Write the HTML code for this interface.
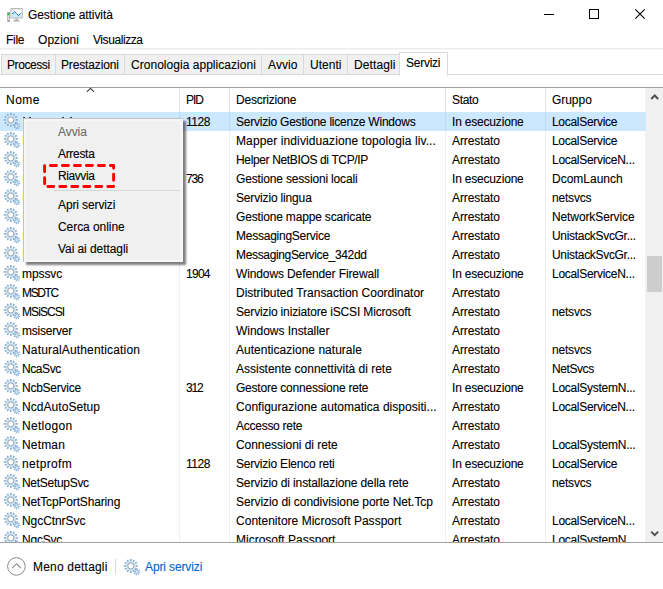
<!DOCTYPE html>
<html><head><meta charset="utf-8"><title>Gestione attività</title>
<style>
html,body{margin:0;padding:0;background:#fff;}
body{width:663px;height:589px;position:relative;overflow:hidden;font-family:"Liberation Sans",sans-serif;font-size:12px;color:#000;}
.a{position:absolute;white-space:nowrap;line-height:14px;-webkit-text-stroke:0.1px currentColor;}
.ln{position:absolute;}
svg{position:absolute;overflow:visible}
</style></head><body>

<svg style="left:0;top:0" width="30" height="30" viewBox="0 0 30 30">
<rect x="7.3" y="12.5" width="2.6" height="9.1" rx="0.8" fill="#a9a9a9"/>
<rect x="8" y="13" width="1.2" height="8" fill="#dcdcdc"/>
<rect x="7.4" y="12.6" width="2.4" height="1" fill="#5e5468"/>
<rect x="7.6" y="13.7" width="2" height="1.5" fill="#2ad02a"/>
<rect x="7.4" y="20.6" width="2.4" height="1" fill="#777"/>
<rect x="10.4" y="8.1" width="12.4" height="10.4" rx="0.8" fill="#b4b4b4"/>
<rect x="11.1" y="8.8" width="11" height="8.9" fill="#dedede"/>
<rect x="11.8" y="9.9" width="9.6" height="7" fill="#fff"/>
<path d="M11.8 13.5 L13.4 13.4 L14.5 11.4 L16.7 13.6 L18.5 15.6 L20.6 13.4 L21.4 13.4 V16.9 H11.8 Z" fill="#c6ebfa"/>
<path d="M12 13.4 L13.4 13.4 L14.5 11.3 L16.7 13.6 L18.5 15.6 L20.6 13.4 L21.2 13.4" fill="none" stroke="#1f7fc4" stroke-width="1"/>
<rect x="15.3" y="18.5" width="2.4" height="1.6" fill="#b4b4b4"/>
<path d="M14 19.9 H19 L19.8 21.6 H13.2 Z" fill="#b0b0b0"/>
</svg>
<div class="ln" style="left:544px;top:14px;width:10px;height:1px;background:#000"></div>
<div class="ln" style="left:589px;top:9px;width:8px;height:8px;border:1px solid #000"></div>
<svg style="left:635px;top:9px" width="12" height="12" viewBox="0 0 12 12"><path d="M0.3 0.3 L9.7 9.7 M9.7 0.3 L0.3 9.7" stroke="#000" stroke-width="1.1" fill="none"/></svg>
<div class="ln" style="left:0;top:48px;width:663px;height:1px;background:#ededed"></div>
<div class="ln" style="left:0;top:49px;width:663px;height:1px;background:#f7f7f7"></div>
<div class="ln" style="left:1px;top:54px;width:398px;height:20px;background:#f0f0f0;border-top:1px solid #d9d9d9;box-sizing:border-box"></div>
<div class="ln" style="left:1px;top:54px;width:1px;height:20px;background:#d9d9d9"></div>
<div class="ln" style="left:55px;top:54px;width:1px;height:20px;background:#d9d9d9"></div>
<div class="ln" style="left:124px;top:54px;width:1px;height:20px;background:#d9d9d9"></div>
<div class="ln" style="left:261px;top:54px;width:1px;height:20px;background:#d9d9d9"></div>
<div class="ln" style="left:303px;top:54px;width:1px;height:20px;background:#d9d9d9"></div>
<div class="ln" style="left:347px;top:54px;width:1px;height:20px;background:#d9d9d9"></div>
<div class="ln" style="left:0;top:74px;width:663px;height:1px;background:#d9d9d9"></div>
<div class="ln" style="left:399px;top:52px;width:47px;height:22px;border:1px solid #d9d9d9;border-bottom:1px solid #fff;background:#fff"></div>
<div class="ln" style="left:0;top:87px;width:663px;height:1px;background:#a0a0a0"></div>
<div class="ln" style="left:0;top:542px;width:663px;height:1px;background:#a0a0a0"></div>
<svg style="left:86px;top:88px" width="9" height="5" viewBox="86 88 9 5"><path d="M86.9 91.9 L90.5 88.3 L94.1 91.9" stroke="#4a4a4a" stroke-width="1.3" fill="none"/></svg>
<div class="ln" style="left:0;top:112px;width:646px;height:19px;background:#cce8ff"></div>
<div class="ln" style="left:179px;top:88px;width:1px;height:24px;background:#e0e5ea"></div>
<div class="ln" style="left:179px;top:112px;width:1px;height:19px;background:#bcdcf4"></div>
<div class="ln" style="left:179px;top:131px;width:1px;height:411px;background:#e9f1fa"></div>
<div class="ln" style="left:229px;top:88px;width:1px;height:24px;background:#e0e5ea"></div>
<div class="ln" style="left:229px;top:112px;width:1px;height:19px;background:#bcdcf4"></div>
<div class="ln" style="left:229px;top:131px;width:1px;height:411px;background:#e9f1fa"></div>
<div class="ln" style="left:445px;top:88px;width:1px;height:24px;background:#e0e5ea"></div>
<div class="ln" style="left:445px;top:112px;width:1px;height:19px;background:#bcdcf4"></div>
<div class="ln" style="left:445px;top:131px;width:1px;height:411px;background:#e9f1fa"></div>
<div class="ln" style="left:545px;top:88px;width:1px;height:24px;background:#e0e5ea"></div>
<div class="ln" style="left:545px;top:112px;width:1px;height:19px;background:#bcdcf4"></div>
<div class="ln" style="left:545px;top:131px;width:1px;height:411px;background:#e9f1fa"></div>
<div class="a" style="left:28px;top:8px;letter-spacing:-0.072px;">Gestione attività</div>
<div class="a" style="left:6px;top:33px;letter-spacing:-0.279px;">File</div>
<div class="a" style="left:38px;top:33px;letter-spacing:0.052px;">Opzioni</div>
<div class="a" style="left:93px;top:33px;letter-spacing:-0.423px;">Visualizza</div>
<div class="a" style="left:7px;top:58px;letter-spacing:-0.416px;">Processi</div>
<div class="a" style="left:61px;top:58px;letter-spacing:-0.146px;">Prestazioni</div>
<div class="a" style="left:131px;top:58px;letter-spacing:0.033px;">Cronologia applicazioni</div>
<div class="a" style="left:268px;top:58px;letter-spacing:0.093px;">Avvio</div>
<div class="a" style="left:310px;top:58px;letter-spacing:0.030px;">Utenti</div>
<div class="a" style="left:354px;top:58px;letter-spacing:0.116px;">Dettagli</div>
<div class="a" style="left:406px;top:56px;letter-spacing:-0.251px;">Servizi</div>
<div class="a" style="left:6px;top:93px;letter-spacing:0.497px;">Nome</div>
<div class="a" style="left:186px;top:93px;letter-spacing:-1.102px;">PID</div>
<div class="a" style="left:236px;top:93px;letter-spacing:-0.219px;">Descrizione</div>
<div class="a" style="left:452px;top:93px;letter-spacing:-0.330px;">Stato</div>
<div class="a" style="left:552px;top:93px;letter-spacing:-0.045px;">Gruppo</div>
<div style="position:absolute;left:0;top:112px;width:646px;height:430px;overflow:hidden">
<svg style="left:4px;top:1px" width="16" height="16" viewBox="0 0 16 16"><g>
<g transform="translate(6.8 6.9)" fill="#8aadd0"><rect x="-0.85" y="-6.95" width="1.7" height="2.3" transform="rotate(0)"/><rect x="-0.85" y="-6.95" width="1.7" height="2.3" transform="rotate(30)"/><rect x="-0.85" y="-6.95" width="1.7" height="2.3" transform="rotate(60)"/><rect x="-0.85" y="-6.95" width="1.7" height="2.3" transform="rotate(90)"/><rect x="-0.85" y="-6.95" width="1.7" height="2.3" transform="rotate(120)"/><rect x="-0.85" y="-6.95" width="1.7" height="2.3" transform="rotate(150)"/><rect x="-0.85" y="-6.95" width="1.7" height="2.3" transform="rotate(180)"/><rect x="-0.85" y="-6.95" width="1.7" height="2.3" transform="rotate(210)"/><rect x="-0.85" y="-6.95" width="1.7" height="2.3" transform="rotate(240)"/><rect x="-0.85" y="-6.95" width="1.7" height="2.3" transform="rotate(270)"/><rect x="-0.85" y="-6.95" width="1.7" height="2.3" transform="rotate(300)"/><rect x="-0.85" y="-6.95" width="1.7" height="2.3" transform="rotate(330)"/></g>
<circle cx="6.8" cy="6.9" r="3.95" fill="none" stroke="#c8e6f6" stroke-width="2.1"/>
<circle cx="6.8" cy="6.9" r="3.05" fill="#fff" stroke="#868d96" stroke-width="0.8"/>
<g transform="translate(12.8 12.9)" fill="#7aa3cc"><rect x="-0.5" y="-3.4" width="1" height="1.5" transform="rotate(10)"/><rect x="-0.5" y="-3.4" width="1" height="1.5" transform="rotate(55)"/><rect x="-0.5" y="-3.4" width="1" height="1.5" transform="rotate(100)"/><rect x="-0.5" y="-3.4" width="1" height="1.5" transform="rotate(145)"/><rect x="-0.5" y="-3.4" width="1" height="1.5" transform="rotate(190)"/><rect x="-0.5" y="-3.4" width="1" height="1.5" transform="rotate(235)"/><rect x="-0.5" y="-3.4" width="1" height="1.5" transform="rotate(280)"/><rect x="-0.5" y="-3.4" width="1" height="1.5" transform="rotate(325)"/></g>
<circle cx="12.8" cy="12.9" r="1.5" fill="#fff" stroke="#a9cde8" stroke-width="1.5"/>
</symbol></svg>
<svg style="left:4px;top:20px" width="16" height="16" viewBox="0 0 16 16"><g>
<g transform="translate(6.8 6.9)" fill="#8aadd0"><rect x="-0.85" y="-6.95" width="1.7" height="2.3" transform="rotate(0)"/><rect x="-0.85" y="-6.95" width="1.7" height="2.3" transform="rotate(30)"/><rect x="-0.85" y="-6.95" width="1.7" height="2.3" transform="rotate(60)"/><rect x="-0.85" y="-6.95" width="1.7" height="2.3" transform="rotate(90)"/><rect x="-0.85" y="-6.95" width="1.7" height="2.3" transform="rotate(120)"/><rect x="-0.85" y="-6.95" width="1.7" height="2.3" transform="rotate(150)"/><rect x="-0.85" y="-6.95" width="1.7" height="2.3" transform="rotate(180)"/><rect x="-0.85" y="-6.95" width="1.7" height="2.3" transform="rotate(210)"/><rect x="-0.85" y="-6.95" width="1.7" height="2.3" transform="rotate(240)"/><rect x="-0.85" y="-6.95" width="1.7" height="2.3" transform="rotate(270)"/><rect x="-0.85" y="-6.95" width="1.7" height="2.3" transform="rotate(300)"/><rect x="-0.85" y="-6.95" width="1.7" height="2.3" transform="rotate(330)"/></g>
<circle cx="6.8" cy="6.9" r="3.95" fill="none" stroke="#c8e6f6" stroke-width="2.1"/>
<circle cx="6.8" cy="6.9" r="3.05" fill="#fff" stroke="#868d96" stroke-width="0.8"/>
<g transform="translate(12.8 12.9)" fill="#7aa3cc"><rect x="-0.5" y="-3.4" width="1" height="1.5" transform="rotate(10)"/><rect x="-0.5" y="-3.4" width="1" height="1.5" transform="rotate(55)"/><rect x="-0.5" y="-3.4" width="1" height="1.5" transform="rotate(100)"/><rect x="-0.5" y="-3.4" width="1" height="1.5" transform="rotate(145)"/><rect x="-0.5" y="-3.4" width="1" height="1.5" transform="rotate(190)"/><rect x="-0.5" y="-3.4" width="1" height="1.5" transform="rotate(235)"/><rect x="-0.5" y="-3.4" width="1" height="1.5" transform="rotate(280)"/><rect x="-0.5" y="-3.4" width="1" height="1.5" transform="rotate(325)"/></g>
<circle cx="12.8" cy="12.9" r="1.5" fill="#fff" stroke="#a9cde8" stroke-width="1.5"/>
</symbol></svg>
<svg style="left:4px;top:39px" width="16" height="16" viewBox="0 0 16 16"><g>
<g transform="translate(6.8 6.9)" fill="#8aadd0"><rect x="-0.85" y="-6.95" width="1.7" height="2.3" transform="rotate(0)"/><rect x="-0.85" y="-6.95" width="1.7" height="2.3" transform="rotate(30)"/><rect x="-0.85" y="-6.95" width="1.7" height="2.3" transform="rotate(60)"/><rect x="-0.85" y="-6.95" width="1.7" height="2.3" transform="rotate(90)"/><rect x="-0.85" y="-6.95" width="1.7" height="2.3" transform="rotate(120)"/><rect x="-0.85" y="-6.95" width="1.7" height="2.3" transform="rotate(150)"/><rect x="-0.85" y="-6.95" width="1.7" height="2.3" transform="rotate(180)"/><rect x="-0.85" y="-6.95" width="1.7" height="2.3" transform="rotate(210)"/><rect x="-0.85" y="-6.95" width="1.7" height="2.3" transform="rotate(240)"/><rect x="-0.85" y="-6.95" width="1.7" height="2.3" transform="rotate(270)"/><rect x="-0.85" y="-6.95" width="1.7" height="2.3" transform="rotate(300)"/><rect x="-0.85" y="-6.95" width="1.7" height="2.3" transform="rotate(330)"/></g>
<circle cx="6.8" cy="6.9" r="3.95" fill="none" stroke="#c8e6f6" stroke-width="2.1"/>
<circle cx="6.8" cy="6.9" r="3.05" fill="#fff" stroke="#868d96" stroke-width="0.8"/>
<g transform="translate(12.8 12.9)" fill="#7aa3cc"><rect x="-0.5" y="-3.4" width="1" height="1.5" transform="rotate(10)"/><rect x="-0.5" y="-3.4" width="1" height="1.5" transform="rotate(55)"/><rect x="-0.5" y="-3.4" width="1" height="1.5" transform="rotate(100)"/><rect x="-0.5" y="-3.4" width="1" height="1.5" transform="rotate(145)"/><rect x="-0.5" y="-3.4" width="1" height="1.5" transform="rotate(190)"/><rect x="-0.5" y="-3.4" width="1" height="1.5" transform="rotate(235)"/><rect x="-0.5" y="-3.4" width="1" height="1.5" transform="rotate(280)"/><rect x="-0.5" y="-3.4" width="1" height="1.5" transform="rotate(325)"/></g>
<circle cx="12.8" cy="12.9" r="1.5" fill="#fff" stroke="#a9cde8" stroke-width="1.5"/>
</symbol></svg>
<svg style="left:4px;top:58px" width="16" height="16" viewBox="0 0 16 16"><g>
<g transform="translate(6.8 6.9)" fill="#8aadd0"><rect x="-0.85" y="-6.95" width="1.7" height="2.3" transform="rotate(0)"/><rect x="-0.85" y="-6.95" width="1.7" height="2.3" transform="rotate(30)"/><rect x="-0.85" y="-6.95" width="1.7" height="2.3" transform="rotate(60)"/><rect x="-0.85" y="-6.95" width="1.7" height="2.3" transform="rotate(90)"/><rect x="-0.85" y="-6.95" width="1.7" height="2.3" transform="rotate(120)"/><rect x="-0.85" y="-6.95" width="1.7" height="2.3" transform="rotate(150)"/><rect x="-0.85" y="-6.95" width="1.7" height="2.3" transform="rotate(180)"/><rect x="-0.85" y="-6.95" width="1.7" height="2.3" transform="rotate(210)"/><rect x="-0.85" y="-6.95" width="1.7" height="2.3" transform="rotate(240)"/><rect x="-0.85" y="-6.95" width="1.7" height="2.3" transform="rotate(270)"/><rect x="-0.85" y="-6.95" width="1.7" height="2.3" transform="rotate(300)"/><rect x="-0.85" y="-6.95" width="1.7" height="2.3" transform="rotate(330)"/></g>
<circle cx="6.8" cy="6.9" r="3.95" fill="none" stroke="#c8e6f6" stroke-width="2.1"/>
<circle cx="6.8" cy="6.9" r="3.05" fill="#fff" stroke="#868d96" stroke-width="0.8"/>
<g transform="translate(12.8 12.9)" fill="#7aa3cc"><rect x="-0.5" y="-3.4" width="1" height="1.5" transform="rotate(10)"/><rect x="-0.5" y="-3.4" width="1" height="1.5" transform="rotate(55)"/><rect x="-0.5" y="-3.4" width="1" height="1.5" transform="rotate(100)"/><rect x="-0.5" y="-3.4" width="1" height="1.5" transform="rotate(145)"/><rect x="-0.5" y="-3.4" width="1" height="1.5" transform="rotate(190)"/><rect x="-0.5" y="-3.4" width="1" height="1.5" transform="rotate(235)"/><rect x="-0.5" y="-3.4" width="1" height="1.5" transform="rotate(280)"/><rect x="-0.5" y="-3.4" width="1" height="1.5" transform="rotate(325)"/></g>
<circle cx="12.8" cy="12.9" r="1.5" fill="#fff" stroke="#a9cde8" stroke-width="1.5"/>
</symbol></svg>
<svg style="left:4px;top:77px" width="16" height="16" viewBox="0 0 16 16"><g>
<g transform="translate(6.8 6.9)" fill="#8aadd0"><rect x="-0.85" y="-6.95" width="1.7" height="2.3" transform="rotate(0)"/><rect x="-0.85" y="-6.95" width="1.7" height="2.3" transform="rotate(30)"/><rect x="-0.85" y="-6.95" width="1.7" height="2.3" transform="rotate(60)"/><rect x="-0.85" y="-6.95" width="1.7" height="2.3" transform="rotate(90)"/><rect x="-0.85" y="-6.95" width="1.7" height="2.3" transform="rotate(120)"/><rect x="-0.85" y="-6.95" width="1.7" height="2.3" transform="rotate(150)"/><rect x="-0.85" y="-6.95" width="1.7" height="2.3" transform="rotate(180)"/><rect x="-0.85" y="-6.95" width="1.7" height="2.3" transform="rotate(210)"/><rect x="-0.85" y="-6.95" width="1.7" height="2.3" transform="rotate(240)"/><rect x="-0.85" y="-6.95" width="1.7" height="2.3" transform="rotate(270)"/><rect x="-0.85" y="-6.95" width="1.7" height="2.3" transform="rotate(300)"/><rect x="-0.85" y="-6.95" width="1.7" height="2.3" transform="rotate(330)"/></g>
<circle cx="6.8" cy="6.9" r="3.95" fill="none" stroke="#c8e6f6" stroke-width="2.1"/>
<circle cx="6.8" cy="6.9" r="3.05" fill="#fff" stroke="#868d96" stroke-width="0.8"/>
<g transform="translate(12.8 12.9)" fill="#7aa3cc"><rect x="-0.5" y="-3.4" width="1" height="1.5" transform="rotate(10)"/><rect x="-0.5" y="-3.4" width="1" height="1.5" transform="rotate(55)"/><rect x="-0.5" y="-3.4" width="1" height="1.5" transform="rotate(100)"/><rect x="-0.5" y="-3.4" width="1" height="1.5" transform="rotate(145)"/><rect x="-0.5" y="-3.4" width="1" height="1.5" transform="rotate(190)"/><rect x="-0.5" y="-3.4" width="1" height="1.5" transform="rotate(235)"/><rect x="-0.5" y="-3.4" width="1" height="1.5" transform="rotate(280)"/><rect x="-0.5" y="-3.4" width="1" height="1.5" transform="rotate(325)"/></g>
<circle cx="12.8" cy="12.9" r="1.5" fill="#fff" stroke="#a9cde8" stroke-width="1.5"/>
</symbol></svg>
<svg style="left:4px;top:96px" width="16" height="16" viewBox="0 0 16 16"><g>
<g transform="translate(6.8 6.9)" fill="#8aadd0"><rect x="-0.85" y="-6.95" width="1.7" height="2.3" transform="rotate(0)"/><rect x="-0.85" y="-6.95" width="1.7" height="2.3" transform="rotate(30)"/><rect x="-0.85" y="-6.95" width="1.7" height="2.3" transform="rotate(60)"/><rect x="-0.85" y="-6.95" width="1.7" height="2.3" transform="rotate(90)"/><rect x="-0.85" y="-6.95" width="1.7" height="2.3" transform="rotate(120)"/><rect x="-0.85" y="-6.95" width="1.7" height="2.3" transform="rotate(150)"/><rect x="-0.85" y="-6.95" width="1.7" height="2.3" transform="rotate(180)"/><rect x="-0.85" y="-6.95" width="1.7" height="2.3" transform="rotate(210)"/><rect x="-0.85" y="-6.95" width="1.7" height="2.3" transform="rotate(240)"/><rect x="-0.85" y="-6.95" width="1.7" height="2.3" transform="rotate(270)"/><rect x="-0.85" y="-6.95" width="1.7" height="2.3" transform="rotate(300)"/><rect x="-0.85" y="-6.95" width="1.7" height="2.3" transform="rotate(330)"/></g>
<circle cx="6.8" cy="6.9" r="3.95" fill="none" stroke="#c8e6f6" stroke-width="2.1"/>
<circle cx="6.8" cy="6.9" r="3.05" fill="#fff" stroke="#868d96" stroke-width="0.8"/>
<g transform="translate(12.8 12.9)" fill="#7aa3cc"><rect x="-0.5" y="-3.4" width="1" height="1.5" transform="rotate(10)"/><rect x="-0.5" y="-3.4" width="1" height="1.5" transform="rotate(55)"/><rect x="-0.5" y="-3.4" width="1" height="1.5" transform="rotate(100)"/><rect x="-0.5" y="-3.4" width="1" height="1.5" transform="rotate(145)"/><rect x="-0.5" y="-3.4" width="1" height="1.5" transform="rotate(190)"/><rect x="-0.5" y="-3.4" width="1" height="1.5" transform="rotate(235)"/><rect x="-0.5" y="-3.4" width="1" height="1.5" transform="rotate(280)"/><rect x="-0.5" y="-3.4" width="1" height="1.5" transform="rotate(325)"/></g>
<circle cx="12.8" cy="12.9" r="1.5" fill="#fff" stroke="#a9cde8" stroke-width="1.5"/>
</symbol></svg>
<svg style="left:4px;top:115px" width="16" height="16" viewBox="0 0 16 16"><g>
<g transform="translate(6.8 6.9)" fill="#8aadd0"><rect x="-0.85" y="-6.95" width="1.7" height="2.3" transform="rotate(0)"/><rect x="-0.85" y="-6.95" width="1.7" height="2.3" transform="rotate(30)"/><rect x="-0.85" y="-6.95" width="1.7" height="2.3" transform="rotate(60)"/><rect x="-0.85" y="-6.95" width="1.7" height="2.3" transform="rotate(90)"/><rect x="-0.85" y="-6.95" width="1.7" height="2.3" transform="rotate(120)"/><rect x="-0.85" y="-6.95" width="1.7" height="2.3" transform="rotate(150)"/><rect x="-0.85" y="-6.95" width="1.7" height="2.3" transform="rotate(180)"/><rect x="-0.85" y="-6.95" width="1.7" height="2.3" transform="rotate(210)"/><rect x="-0.85" y="-6.95" width="1.7" height="2.3" transform="rotate(240)"/><rect x="-0.85" y="-6.95" width="1.7" height="2.3" transform="rotate(270)"/><rect x="-0.85" y="-6.95" width="1.7" height="2.3" transform="rotate(300)"/><rect x="-0.85" y="-6.95" width="1.7" height="2.3" transform="rotate(330)"/></g>
<circle cx="6.8" cy="6.9" r="3.95" fill="none" stroke="#c8e6f6" stroke-width="2.1"/>
<circle cx="6.8" cy="6.9" r="3.05" fill="#fff" stroke="#868d96" stroke-width="0.8"/>
<g transform="translate(12.8 12.9)" fill="#7aa3cc"><rect x="-0.5" y="-3.4" width="1" height="1.5" transform="rotate(10)"/><rect x="-0.5" y="-3.4" width="1" height="1.5" transform="rotate(55)"/><rect x="-0.5" y="-3.4" width="1" height="1.5" transform="rotate(100)"/><rect x="-0.5" y="-3.4" width="1" height="1.5" transform="rotate(145)"/><rect x="-0.5" y="-3.4" width="1" height="1.5" transform="rotate(190)"/><rect x="-0.5" y="-3.4" width="1" height="1.5" transform="rotate(235)"/><rect x="-0.5" y="-3.4" width="1" height="1.5" transform="rotate(280)"/><rect x="-0.5" y="-3.4" width="1" height="1.5" transform="rotate(325)"/></g>
<circle cx="12.8" cy="12.9" r="1.5" fill="#fff" stroke="#a9cde8" stroke-width="1.5"/>
</symbol></svg>
<svg style="left:4px;top:134px" width="16" height="16" viewBox="0 0 16 16"><g>
<g transform="translate(6.8 6.9)" fill="#8aadd0"><rect x="-0.85" y="-6.95" width="1.7" height="2.3" transform="rotate(0)"/><rect x="-0.85" y="-6.95" width="1.7" height="2.3" transform="rotate(30)"/><rect x="-0.85" y="-6.95" width="1.7" height="2.3" transform="rotate(60)"/><rect x="-0.85" y="-6.95" width="1.7" height="2.3" transform="rotate(90)"/><rect x="-0.85" y="-6.95" width="1.7" height="2.3" transform="rotate(120)"/><rect x="-0.85" y="-6.95" width="1.7" height="2.3" transform="rotate(150)"/><rect x="-0.85" y="-6.95" width="1.7" height="2.3" transform="rotate(180)"/><rect x="-0.85" y="-6.95" width="1.7" height="2.3" transform="rotate(210)"/><rect x="-0.85" y="-6.95" width="1.7" height="2.3" transform="rotate(240)"/><rect x="-0.85" y="-6.95" width="1.7" height="2.3" transform="rotate(270)"/><rect x="-0.85" y="-6.95" width="1.7" height="2.3" transform="rotate(300)"/><rect x="-0.85" y="-6.95" width="1.7" height="2.3" transform="rotate(330)"/></g>
<circle cx="6.8" cy="6.9" r="3.95" fill="none" stroke="#c8e6f6" stroke-width="2.1"/>
<circle cx="6.8" cy="6.9" r="3.05" fill="#fff" stroke="#868d96" stroke-width="0.8"/>
<g transform="translate(12.8 12.9)" fill="#7aa3cc"><rect x="-0.5" y="-3.4" width="1" height="1.5" transform="rotate(10)"/><rect x="-0.5" y="-3.4" width="1" height="1.5" transform="rotate(55)"/><rect x="-0.5" y="-3.4" width="1" height="1.5" transform="rotate(100)"/><rect x="-0.5" y="-3.4" width="1" height="1.5" transform="rotate(145)"/><rect x="-0.5" y="-3.4" width="1" height="1.5" transform="rotate(190)"/><rect x="-0.5" y="-3.4" width="1" height="1.5" transform="rotate(235)"/><rect x="-0.5" y="-3.4" width="1" height="1.5" transform="rotate(280)"/><rect x="-0.5" y="-3.4" width="1" height="1.5" transform="rotate(325)"/></g>
<circle cx="12.8" cy="12.9" r="1.5" fill="#fff" stroke="#a9cde8" stroke-width="1.5"/>
</symbol></svg>
<svg style="left:4px;top:153px" width="16" height="16" viewBox="0 0 16 16"><g>
<g transform="translate(6.8 6.9)" fill="#8aadd0"><rect x="-0.85" y="-6.95" width="1.7" height="2.3" transform="rotate(0)"/><rect x="-0.85" y="-6.95" width="1.7" height="2.3" transform="rotate(30)"/><rect x="-0.85" y="-6.95" width="1.7" height="2.3" transform="rotate(60)"/><rect x="-0.85" y="-6.95" width="1.7" height="2.3" transform="rotate(90)"/><rect x="-0.85" y="-6.95" width="1.7" height="2.3" transform="rotate(120)"/><rect x="-0.85" y="-6.95" width="1.7" height="2.3" transform="rotate(150)"/><rect x="-0.85" y="-6.95" width="1.7" height="2.3" transform="rotate(180)"/><rect x="-0.85" y="-6.95" width="1.7" height="2.3" transform="rotate(210)"/><rect x="-0.85" y="-6.95" width="1.7" height="2.3" transform="rotate(240)"/><rect x="-0.85" y="-6.95" width="1.7" height="2.3" transform="rotate(270)"/><rect x="-0.85" y="-6.95" width="1.7" height="2.3" transform="rotate(300)"/><rect x="-0.85" y="-6.95" width="1.7" height="2.3" transform="rotate(330)"/></g>
<circle cx="6.8" cy="6.9" r="3.95" fill="none" stroke="#c8e6f6" stroke-width="2.1"/>
<circle cx="6.8" cy="6.9" r="3.05" fill="#fff" stroke="#868d96" stroke-width="0.8"/>
<g transform="translate(12.8 12.9)" fill="#7aa3cc"><rect x="-0.5" y="-3.4" width="1" height="1.5" transform="rotate(10)"/><rect x="-0.5" y="-3.4" width="1" height="1.5" transform="rotate(55)"/><rect x="-0.5" y="-3.4" width="1" height="1.5" transform="rotate(100)"/><rect x="-0.5" y="-3.4" width="1" height="1.5" transform="rotate(145)"/><rect x="-0.5" y="-3.4" width="1" height="1.5" transform="rotate(190)"/><rect x="-0.5" y="-3.4" width="1" height="1.5" transform="rotate(235)"/><rect x="-0.5" y="-3.4" width="1" height="1.5" transform="rotate(280)"/><rect x="-0.5" y="-3.4" width="1" height="1.5" transform="rotate(325)"/></g>
<circle cx="12.8" cy="12.9" r="1.5" fill="#fff" stroke="#a9cde8" stroke-width="1.5"/>
</symbol></svg>
<svg style="left:4px;top:172px" width="16" height="16" viewBox="0 0 16 16"><g>
<g transform="translate(6.8 6.9)" fill="#8aadd0"><rect x="-0.85" y="-6.95" width="1.7" height="2.3" transform="rotate(0)"/><rect x="-0.85" y="-6.95" width="1.7" height="2.3" transform="rotate(30)"/><rect x="-0.85" y="-6.95" width="1.7" height="2.3" transform="rotate(60)"/><rect x="-0.85" y="-6.95" width="1.7" height="2.3" transform="rotate(90)"/><rect x="-0.85" y="-6.95" width="1.7" height="2.3" transform="rotate(120)"/><rect x="-0.85" y="-6.95" width="1.7" height="2.3" transform="rotate(150)"/><rect x="-0.85" y="-6.95" width="1.7" height="2.3" transform="rotate(180)"/><rect x="-0.85" y="-6.95" width="1.7" height="2.3" transform="rotate(210)"/><rect x="-0.85" y="-6.95" width="1.7" height="2.3" transform="rotate(240)"/><rect x="-0.85" y="-6.95" width="1.7" height="2.3" transform="rotate(270)"/><rect x="-0.85" y="-6.95" width="1.7" height="2.3" transform="rotate(300)"/><rect x="-0.85" y="-6.95" width="1.7" height="2.3" transform="rotate(330)"/></g>
<circle cx="6.8" cy="6.9" r="3.95" fill="none" stroke="#c8e6f6" stroke-width="2.1"/>
<circle cx="6.8" cy="6.9" r="3.05" fill="#fff" stroke="#868d96" stroke-width="0.8"/>
<g transform="translate(12.8 12.9)" fill="#7aa3cc"><rect x="-0.5" y="-3.4" width="1" height="1.5" transform="rotate(10)"/><rect x="-0.5" y="-3.4" width="1" height="1.5" transform="rotate(55)"/><rect x="-0.5" y="-3.4" width="1" height="1.5" transform="rotate(100)"/><rect x="-0.5" y="-3.4" width="1" height="1.5" transform="rotate(145)"/><rect x="-0.5" y="-3.4" width="1" height="1.5" transform="rotate(190)"/><rect x="-0.5" y="-3.4" width="1" height="1.5" transform="rotate(235)"/><rect x="-0.5" y="-3.4" width="1" height="1.5" transform="rotate(280)"/><rect x="-0.5" y="-3.4" width="1" height="1.5" transform="rotate(325)"/></g>
<circle cx="12.8" cy="12.9" r="1.5" fill="#fff" stroke="#a9cde8" stroke-width="1.5"/>
</symbol></svg>
<svg style="left:4px;top:191px" width="16" height="16" viewBox="0 0 16 16"><g>
<g transform="translate(6.8 6.9)" fill="#8aadd0"><rect x="-0.85" y="-6.95" width="1.7" height="2.3" transform="rotate(0)"/><rect x="-0.85" y="-6.95" width="1.7" height="2.3" transform="rotate(30)"/><rect x="-0.85" y="-6.95" width="1.7" height="2.3" transform="rotate(60)"/><rect x="-0.85" y="-6.95" width="1.7" height="2.3" transform="rotate(90)"/><rect x="-0.85" y="-6.95" width="1.7" height="2.3" transform="rotate(120)"/><rect x="-0.85" y="-6.95" width="1.7" height="2.3" transform="rotate(150)"/><rect x="-0.85" y="-6.95" width="1.7" height="2.3" transform="rotate(180)"/><rect x="-0.85" y="-6.95" width="1.7" height="2.3" transform="rotate(210)"/><rect x="-0.85" y="-6.95" width="1.7" height="2.3" transform="rotate(240)"/><rect x="-0.85" y="-6.95" width="1.7" height="2.3" transform="rotate(270)"/><rect x="-0.85" y="-6.95" width="1.7" height="2.3" transform="rotate(300)"/><rect x="-0.85" y="-6.95" width="1.7" height="2.3" transform="rotate(330)"/></g>
<circle cx="6.8" cy="6.9" r="3.95" fill="none" stroke="#c8e6f6" stroke-width="2.1"/>
<circle cx="6.8" cy="6.9" r="3.05" fill="#fff" stroke="#868d96" stroke-width="0.8"/>
<g transform="translate(12.8 12.9)" fill="#7aa3cc"><rect x="-0.5" y="-3.4" width="1" height="1.5" transform="rotate(10)"/><rect x="-0.5" y="-3.4" width="1" height="1.5" transform="rotate(55)"/><rect x="-0.5" y="-3.4" width="1" height="1.5" transform="rotate(100)"/><rect x="-0.5" y="-3.4" width="1" height="1.5" transform="rotate(145)"/><rect x="-0.5" y="-3.4" width="1" height="1.5" transform="rotate(190)"/><rect x="-0.5" y="-3.4" width="1" height="1.5" transform="rotate(235)"/><rect x="-0.5" y="-3.4" width="1" height="1.5" transform="rotate(280)"/><rect x="-0.5" y="-3.4" width="1" height="1.5" transform="rotate(325)"/></g>
<circle cx="12.8" cy="12.9" r="1.5" fill="#fff" stroke="#a9cde8" stroke-width="1.5"/>
</symbol></svg>
<svg style="left:4px;top:210px" width="16" height="16" viewBox="0 0 16 16"><g>
<g transform="translate(6.8 6.9)" fill="#8aadd0"><rect x="-0.85" y="-6.95" width="1.7" height="2.3" transform="rotate(0)"/><rect x="-0.85" y="-6.95" width="1.7" height="2.3" transform="rotate(30)"/><rect x="-0.85" y="-6.95" width="1.7" height="2.3" transform="rotate(60)"/><rect x="-0.85" y="-6.95" width="1.7" height="2.3" transform="rotate(90)"/><rect x="-0.85" y="-6.95" width="1.7" height="2.3" transform="rotate(120)"/><rect x="-0.85" y="-6.95" width="1.7" height="2.3" transform="rotate(150)"/><rect x="-0.85" y="-6.95" width="1.7" height="2.3" transform="rotate(180)"/><rect x="-0.85" y="-6.95" width="1.7" height="2.3" transform="rotate(210)"/><rect x="-0.85" y="-6.95" width="1.7" height="2.3" transform="rotate(240)"/><rect x="-0.85" y="-6.95" width="1.7" height="2.3" transform="rotate(270)"/><rect x="-0.85" y="-6.95" width="1.7" height="2.3" transform="rotate(300)"/><rect x="-0.85" y="-6.95" width="1.7" height="2.3" transform="rotate(330)"/></g>
<circle cx="6.8" cy="6.9" r="3.95" fill="none" stroke="#c8e6f6" stroke-width="2.1"/>
<circle cx="6.8" cy="6.9" r="3.05" fill="#fff" stroke="#868d96" stroke-width="0.8"/>
<g transform="translate(12.8 12.9)" fill="#7aa3cc"><rect x="-0.5" y="-3.4" width="1" height="1.5" transform="rotate(10)"/><rect x="-0.5" y="-3.4" width="1" height="1.5" transform="rotate(55)"/><rect x="-0.5" y="-3.4" width="1" height="1.5" transform="rotate(100)"/><rect x="-0.5" y="-3.4" width="1" height="1.5" transform="rotate(145)"/><rect x="-0.5" y="-3.4" width="1" height="1.5" transform="rotate(190)"/><rect x="-0.5" y="-3.4" width="1" height="1.5" transform="rotate(235)"/><rect x="-0.5" y="-3.4" width="1" height="1.5" transform="rotate(280)"/><rect x="-0.5" y="-3.4" width="1" height="1.5" transform="rotate(325)"/></g>
<circle cx="12.8" cy="12.9" r="1.5" fill="#fff" stroke="#a9cde8" stroke-width="1.5"/>
</symbol></svg>
<svg style="left:4px;top:229px" width="16" height="16" viewBox="0 0 16 16"><g>
<g transform="translate(6.8 6.9)" fill="#8aadd0"><rect x="-0.85" y="-6.95" width="1.7" height="2.3" transform="rotate(0)"/><rect x="-0.85" y="-6.95" width="1.7" height="2.3" transform="rotate(30)"/><rect x="-0.85" y="-6.95" width="1.7" height="2.3" transform="rotate(60)"/><rect x="-0.85" y="-6.95" width="1.7" height="2.3" transform="rotate(90)"/><rect x="-0.85" y="-6.95" width="1.7" height="2.3" transform="rotate(120)"/><rect x="-0.85" y="-6.95" width="1.7" height="2.3" transform="rotate(150)"/><rect x="-0.85" y="-6.95" width="1.7" height="2.3" transform="rotate(180)"/><rect x="-0.85" y="-6.95" width="1.7" height="2.3" transform="rotate(210)"/><rect x="-0.85" y="-6.95" width="1.7" height="2.3" transform="rotate(240)"/><rect x="-0.85" y="-6.95" width="1.7" height="2.3" transform="rotate(270)"/><rect x="-0.85" y="-6.95" width="1.7" height="2.3" transform="rotate(300)"/><rect x="-0.85" y="-6.95" width="1.7" height="2.3" transform="rotate(330)"/></g>
<circle cx="6.8" cy="6.9" r="3.95" fill="none" stroke="#c8e6f6" stroke-width="2.1"/>
<circle cx="6.8" cy="6.9" r="3.05" fill="#fff" stroke="#868d96" stroke-width="0.8"/>
<g transform="translate(12.8 12.9)" fill="#7aa3cc"><rect x="-0.5" y="-3.4" width="1" height="1.5" transform="rotate(10)"/><rect x="-0.5" y="-3.4" width="1" height="1.5" transform="rotate(55)"/><rect x="-0.5" y="-3.4" width="1" height="1.5" transform="rotate(100)"/><rect x="-0.5" y="-3.4" width="1" height="1.5" transform="rotate(145)"/><rect x="-0.5" y="-3.4" width="1" height="1.5" transform="rotate(190)"/><rect x="-0.5" y="-3.4" width="1" height="1.5" transform="rotate(235)"/><rect x="-0.5" y="-3.4" width="1" height="1.5" transform="rotate(280)"/><rect x="-0.5" y="-3.4" width="1" height="1.5" transform="rotate(325)"/></g>
<circle cx="12.8" cy="12.9" r="1.5" fill="#fff" stroke="#a9cde8" stroke-width="1.5"/>
</symbol></svg>
<svg style="left:4px;top:248px" width="16" height="16" viewBox="0 0 16 16"><g>
<g transform="translate(6.8 6.9)" fill="#8aadd0"><rect x="-0.85" y="-6.95" width="1.7" height="2.3" transform="rotate(0)"/><rect x="-0.85" y="-6.95" width="1.7" height="2.3" transform="rotate(30)"/><rect x="-0.85" y="-6.95" width="1.7" height="2.3" transform="rotate(60)"/><rect x="-0.85" y="-6.95" width="1.7" height="2.3" transform="rotate(90)"/><rect x="-0.85" y="-6.95" width="1.7" height="2.3" transform="rotate(120)"/><rect x="-0.85" y="-6.95" width="1.7" height="2.3" transform="rotate(150)"/><rect x="-0.85" y="-6.95" width="1.7" height="2.3" transform="rotate(180)"/><rect x="-0.85" y="-6.95" width="1.7" height="2.3" transform="rotate(210)"/><rect x="-0.85" y="-6.95" width="1.7" height="2.3" transform="rotate(240)"/><rect x="-0.85" y="-6.95" width="1.7" height="2.3" transform="rotate(270)"/><rect x="-0.85" y="-6.95" width="1.7" height="2.3" transform="rotate(300)"/><rect x="-0.85" y="-6.95" width="1.7" height="2.3" transform="rotate(330)"/></g>
<circle cx="6.8" cy="6.9" r="3.95" fill="none" stroke="#c8e6f6" stroke-width="2.1"/>
<circle cx="6.8" cy="6.9" r="3.05" fill="#fff" stroke="#868d96" stroke-width="0.8"/>
<g transform="translate(12.8 12.9)" fill="#7aa3cc"><rect x="-0.5" y="-3.4" width="1" height="1.5" transform="rotate(10)"/><rect x="-0.5" y="-3.4" width="1" height="1.5" transform="rotate(55)"/><rect x="-0.5" y="-3.4" width="1" height="1.5" transform="rotate(100)"/><rect x="-0.5" y="-3.4" width="1" height="1.5" transform="rotate(145)"/><rect x="-0.5" y="-3.4" width="1" height="1.5" transform="rotate(190)"/><rect x="-0.5" y="-3.4" width="1" height="1.5" transform="rotate(235)"/><rect x="-0.5" y="-3.4" width="1" height="1.5" transform="rotate(280)"/><rect x="-0.5" y="-3.4" width="1" height="1.5" transform="rotate(325)"/></g>
<circle cx="12.8" cy="12.9" r="1.5" fill="#fff" stroke="#a9cde8" stroke-width="1.5"/>
</symbol></svg>
<svg style="left:4px;top:267px" width="16" height="16" viewBox="0 0 16 16"><g>
<g transform="translate(6.8 6.9)" fill="#8aadd0"><rect x="-0.85" y="-6.95" width="1.7" height="2.3" transform="rotate(0)"/><rect x="-0.85" y="-6.95" width="1.7" height="2.3" transform="rotate(30)"/><rect x="-0.85" y="-6.95" width="1.7" height="2.3" transform="rotate(60)"/><rect x="-0.85" y="-6.95" width="1.7" height="2.3" transform="rotate(90)"/><rect x="-0.85" y="-6.95" width="1.7" height="2.3" transform="rotate(120)"/><rect x="-0.85" y="-6.95" width="1.7" height="2.3" transform="rotate(150)"/><rect x="-0.85" y="-6.95" width="1.7" height="2.3" transform="rotate(180)"/><rect x="-0.85" y="-6.95" width="1.7" height="2.3" transform="rotate(210)"/><rect x="-0.85" y="-6.95" width="1.7" height="2.3" transform="rotate(240)"/><rect x="-0.85" y="-6.95" width="1.7" height="2.3" transform="rotate(270)"/><rect x="-0.85" y="-6.95" width="1.7" height="2.3" transform="rotate(300)"/><rect x="-0.85" y="-6.95" width="1.7" height="2.3" transform="rotate(330)"/></g>
<circle cx="6.8" cy="6.9" r="3.95" fill="none" stroke="#c8e6f6" stroke-width="2.1"/>
<circle cx="6.8" cy="6.9" r="3.05" fill="#fff" stroke="#868d96" stroke-width="0.8"/>
<g transform="translate(12.8 12.9)" fill="#7aa3cc"><rect x="-0.5" y="-3.4" width="1" height="1.5" transform="rotate(10)"/><rect x="-0.5" y="-3.4" width="1" height="1.5" transform="rotate(55)"/><rect x="-0.5" y="-3.4" width="1" height="1.5" transform="rotate(100)"/><rect x="-0.5" y="-3.4" width="1" height="1.5" transform="rotate(145)"/><rect x="-0.5" y="-3.4" width="1" height="1.5" transform="rotate(190)"/><rect x="-0.5" y="-3.4" width="1" height="1.5" transform="rotate(235)"/><rect x="-0.5" y="-3.4" width="1" height="1.5" transform="rotate(280)"/><rect x="-0.5" y="-3.4" width="1" height="1.5" transform="rotate(325)"/></g>
<circle cx="12.8" cy="12.9" r="1.5" fill="#fff" stroke="#a9cde8" stroke-width="1.5"/>
</symbol></svg>
<svg style="left:4px;top:286px" width="16" height="16" viewBox="0 0 16 16"><g>
<g transform="translate(6.8 6.9)" fill="#8aadd0"><rect x="-0.85" y="-6.95" width="1.7" height="2.3" transform="rotate(0)"/><rect x="-0.85" y="-6.95" width="1.7" height="2.3" transform="rotate(30)"/><rect x="-0.85" y="-6.95" width="1.7" height="2.3" transform="rotate(60)"/><rect x="-0.85" y="-6.95" width="1.7" height="2.3" transform="rotate(90)"/><rect x="-0.85" y="-6.95" width="1.7" height="2.3" transform="rotate(120)"/><rect x="-0.85" y="-6.95" width="1.7" height="2.3" transform="rotate(150)"/><rect x="-0.85" y="-6.95" width="1.7" height="2.3" transform="rotate(180)"/><rect x="-0.85" y="-6.95" width="1.7" height="2.3" transform="rotate(210)"/><rect x="-0.85" y="-6.95" width="1.7" height="2.3" transform="rotate(240)"/><rect x="-0.85" y="-6.95" width="1.7" height="2.3" transform="rotate(270)"/><rect x="-0.85" y="-6.95" width="1.7" height="2.3" transform="rotate(300)"/><rect x="-0.85" y="-6.95" width="1.7" height="2.3" transform="rotate(330)"/></g>
<circle cx="6.8" cy="6.9" r="3.95" fill="none" stroke="#c8e6f6" stroke-width="2.1"/>
<circle cx="6.8" cy="6.9" r="3.05" fill="#fff" stroke="#868d96" stroke-width="0.8"/>
<g transform="translate(12.8 12.9)" fill="#7aa3cc"><rect x="-0.5" y="-3.4" width="1" height="1.5" transform="rotate(10)"/><rect x="-0.5" y="-3.4" width="1" height="1.5" transform="rotate(55)"/><rect x="-0.5" y="-3.4" width="1" height="1.5" transform="rotate(100)"/><rect x="-0.5" y="-3.4" width="1" height="1.5" transform="rotate(145)"/><rect x="-0.5" y="-3.4" width="1" height="1.5" transform="rotate(190)"/><rect x="-0.5" y="-3.4" width="1" height="1.5" transform="rotate(235)"/><rect x="-0.5" y="-3.4" width="1" height="1.5" transform="rotate(280)"/><rect x="-0.5" y="-3.4" width="1" height="1.5" transform="rotate(325)"/></g>
<circle cx="12.8" cy="12.9" r="1.5" fill="#fff" stroke="#a9cde8" stroke-width="1.5"/>
</symbol></svg>
<svg style="left:4px;top:305px" width="16" height="16" viewBox="0 0 16 16"><g>
<g transform="translate(6.8 6.9)" fill="#8aadd0"><rect x="-0.85" y="-6.95" width="1.7" height="2.3" transform="rotate(0)"/><rect x="-0.85" y="-6.95" width="1.7" height="2.3" transform="rotate(30)"/><rect x="-0.85" y="-6.95" width="1.7" height="2.3" transform="rotate(60)"/><rect x="-0.85" y="-6.95" width="1.7" height="2.3" transform="rotate(90)"/><rect x="-0.85" y="-6.95" width="1.7" height="2.3" transform="rotate(120)"/><rect x="-0.85" y="-6.95" width="1.7" height="2.3" transform="rotate(150)"/><rect x="-0.85" y="-6.95" width="1.7" height="2.3" transform="rotate(180)"/><rect x="-0.85" y="-6.95" width="1.7" height="2.3" transform="rotate(210)"/><rect x="-0.85" y="-6.95" width="1.7" height="2.3" transform="rotate(240)"/><rect x="-0.85" y="-6.95" width="1.7" height="2.3" transform="rotate(270)"/><rect x="-0.85" y="-6.95" width="1.7" height="2.3" transform="rotate(300)"/><rect x="-0.85" y="-6.95" width="1.7" height="2.3" transform="rotate(330)"/></g>
<circle cx="6.8" cy="6.9" r="3.95" fill="none" stroke="#c8e6f6" stroke-width="2.1"/>
<circle cx="6.8" cy="6.9" r="3.05" fill="#fff" stroke="#868d96" stroke-width="0.8"/>
<g transform="translate(12.8 12.9)" fill="#7aa3cc"><rect x="-0.5" y="-3.4" width="1" height="1.5" transform="rotate(10)"/><rect x="-0.5" y="-3.4" width="1" height="1.5" transform="rotate(55)"/><rect x="-0.5" y="-3.4" width="1" height="1.5" transform="rotate(100)"/><rect x="-0.5" y="-3.4" width="1" height="1.5" transform="rotate(145)"/><rect x="-0.5" y="-3.4" width="1" height="1.5" transform="rotate(190)"/><rect x="-0.5" y="-3.4" width="1" height="1.5" transform="rotate(235)"/><rect x="-0.5" y="-3.4" width="1" height="1.5" transform="rotate(280)"/><rect x="-0.5" y="-3.4" width="1" height="1.5" transform="rotate(325)"/></g>
<circle cx="12.8" cy="12.9" r="1.5" fill="#fff" stroke="#a9cde8" stroke-width="1.5"/>
</symbol></svg>
<svg style="left:4px;top:324px" width="16" height="16" viewBox="0 0 16 16"><g>
<g transform="translate(6.8 6.9)" fill="#8aadd0"><rect x="-0.85" y="-6.95" width="1.7" height="2.3" transform="rotate(0)"/><rect x="-0.85" y="-6.95" width="1.7" height="2.3" transform="rotate(30)"/><rect x="-0.85" y="-6.95" width="1.7" height="2.3" transform="rotate(60)"/><rect x="-0.85" y="-6.95" width="1.7" height="2.3" transform="rotate(90)"/><rect x="-0.85" y="-6.95" width="1.7" height="2.3" transform="rotate(120)"/><rect x="-0.85" y="-6.95" width="1.7" height="2.3" transform="rotate(150)"/><rect x="-0.85" y="-6.95" width="1.7" height="2.3" transform="rotate(180)"/><rect x="-0.85" y="-6.95" width="1.7" height="2.3" transform="rotate(210)"/><rect x="-0.85" y="-6.95" width="1.7" height="2.3" transform="rotate(240)"/><rect x="-0.85" y="-6.95" width="1.7" height="2.3" transform="rotate(270)"/><rect x="-0.85" y="-6.95" width="1.7" height="2.3" transform="rotate(300)"/><rect x="-0.85" y="-6.95" width="1.7" height="2.3" transform="rotate(330)"/></g>
<circle cx="6.8" cy="6.9" r="3.95" fill="none" stroke="#c8e6f6" stroke-width="2.1"/>
<circle cx="6.8" cy="6.9" r="3.05" fill="#fff" stroke="#868d96" stroke-width="0.8"/>
<g transform="translate(12.8 12.9)" fill="#7aa3cc"><rect x="-0.5" y="-3.4" width="1" height="1.5" transform="rotate(10)"/><rect x="-0.5" y="-3.4" width="1" height="1.5" transform="rotate(55)"/><rect x="-0.5" y="-3.4" width="1" height="1.5" transform="rotate(100)"/><rect x="-0.5" y="-3.4" width="1" height="1.5" transform="rotate(145)"/><rect x="-0.5" y="-3.4" width="1" height="1.5" transform="rotate(190)"/><rect x="-0.5" y="-3.4" width="1" height="1.5" transform="rotate(235)"/><rect x="-0.5" y="-3.4" width="1" height="1.5" transform="rotate(280)"/><rect x="-0.5" y="-3.4" width="1" height="1.5" transform="rotate(325)"/></g>
<circle cx="12.8" cy="12.9" r="1.5" fill="#fff" stroke="#a9cde8" stroke-width="1.5"/>
</symbol></svg>
<svg style="left:4px;top:343px" width="16" height="16" viewBox="0 0 16 16"><g>
<g transform="translate(6.8 6.9)" fill="#8aadd0"><rect x="-0.85" y="-6.95" width="1.7" height="2.3" transform="rotate(0)"/><rect x="-0.85" y="-6.95" width="1.7" height="2.3" transform="rotate(30)"/><rect x="-0.85" y="-6.95" width="1.7" height="2.3" transform="rotate(60)"/><rect x="-0.85" y="-6.95" width="1.7" height="2.3" transform="rotate(90)"/><rect x="-0.85" y="-6.95" width="1.7" height="2.3" transform="rotate(120)"/><rect x="-0.85" y="-6.95" width="1.7" height="2.3" transform="rotate(150)"/><rect x="-0.85" y="-6.95" width="1.7" height="2.3" transform="rotate(180)"/><rect x="-0.85" y="-6.95" width="1.7" height="2.3" transform="rotate(210)"/><rect x="-0.85" y="-6.95" width="1.7" height="2.3" transform="rotate(240)"/><rect x="-0.85" y="-6.95" width="1.7" height="2.3" transform="rotate(270)"/><rect x="-0.85" y="-6.95" width="1.7" height="2.3" transform="rotate(300)"/><rect x="-0.85" y="-6.95" width="1.7" height="2.3" transform="rotate(330)"/></g>
<circle cx="6.8" cy="6.9" r="3.95" fill="none" stroke="#c8e6f6" stroke-width="2.1"/>
<circle cx="6.8" cy="6.9" r="3.05" fill="#fff" stroke="#868d96" stroke-width="0.8"/>
<g transform="translate(12.8 12.9)" fill="#7aa3cc"><rect x="-0.5" y="-3.4" width="1" height="1.5" transform="rotate(10)"/><rect x="-0.5" y="-3.4" width="1" height="1.5" transform="rotate(55)"/><rect x="-0.5" y="-3.4" width="1" height="1.5" transform="rotate(100)"/><rect x="-0.5" y="-3.4" width="1" height="1.5" transform="rotate(145)"/><rect x="-0.5" y="-3.4" width="1" height="1.5" transform="rotate(190)"/><rect x="-0.5" y="-3.4" width="1" height="1.5" transform="rotate(235)"/><rect x="-0.5" y="-3.4" width="1" height="1.5" transform="rotate(280)"/><rect x="-0.5" y="-3.4" width="1" height="1.5" transform="rotate(325)"/></g>
<circle cx="12.8" cy="12.9" r="1.5" fill="#fff" stroke="#a9cde8" stroke-width="1.5"/>
</symbol></svg>
<svg style="left:4px;top:362px" width="16" height="16" viewBox="0 0 16 16"><g>
<g transform="translate(6.8 6.9)" fill="#8aadd0"><rect x="-0.85" y="-6.95" width="1.7" height="2.3" transform="rotate(0)"/><rect x="-0.85" y="-6.95" width="1.7" height="2.3" transform="rotate(30)"/><rect x="-0.85" y="-6.95" width="1.7" height="2.3" transform="rotate(60)"/><rect x="-0.85" y="-6.95" width="1.7" height="2.3" transform="rotate(90)"/><rect x="-0.85" y="-6.95" width="1.7" height="2.3" transform="rotate(120)"/><rect x="-0.85" y="-6.95" width="1.7" height="2.3" transform="rotate(150)"/><rect x="-0.85" y="-6.95" width="1.7" height="2.3" transform="rotate(180)"/><rect x="-0.85" y="-6.95" width="1.7" height="2.3" transform="rotate(210)"/><rect x="-0.85" y="-6.95" width="1.7" height="2.3" transform="rotate(240)"/><rect x="-0.85" y="-6.95" width="1.7" height="2.3" transform="rotate(270)"/><rect x="-0.85" y="-6.95" width="1.7" height="2.3" transform="rotate(300)"/><rect x="-0.85" y="-6.95" width="1.7" height="2.3" transform="rotate(330)"/></g>
<circle cx="6.8" cy="6.9" r="3.95" fill="none" stroke="#c8e6f6" stroke-width="2.1"/>
<circle cx="6.8" cy="6.9" r="3.05" fill="#fff" stroke="#868d96" stroke-width="0.8"/>
<g transform="translate(12.8 12.9)" fill="#7aa3cc"><rect x="-0.5" y="-3.4" width="1" height="1.5" transform="rotate(10)"/><rect x="-0.5" y="-3.4" width="1" height="1.5" transform="rotate(55)"/><rect x="-0.5" y="-3.4" width="1" height="1.5" transform="rotate(100)"/><rect x="-0.5" y="-3.4" width="1" height="1.5" transform="rotate(145)"/><rect x="-0.5" y="-3.4" width="1" height="1.5" transform="rotate(190)"/><rect x="-0.5" y="-3.4" width="1" height="1.5" transform="rotate(235)"/><rect x="-0.5" y="-3.4" width="1" height="1.5" transform="rotate(280)"/><rect x="-0.5" y="-3.4" width="1" height="1.5" transform="rotate(325)"/></g>
<circle cx="12.8" cy="12.9" r="1.5" fill="#fff" stroke="#a9cde8" stroke-width="1.5"/>
</symbol></svg>
<svg style="left:4px;top:381px" width="16" height="16" viewBox="0 0 16 16"><g>
<g transform="translate(6.8 6.9)" fill="#8aadd0"><rect x="-0.85" y="-6.95" width="1.7" height="2.3" transform="rotate(0)"/><rect x="-0.85" y="-6.95" width="1.7" height="2.3" transform="rotate(30)"/><rect x="-0.85" y="-6.95" width="1.7" height="2.3" transform="rotate(60)"/><rect x="-0.85" y="-6.95" width="1.7" height="2.3" transform="rotate(90)"/><rect x="-0.85" y="-6.95" width="1.7" height="2.3" transform="rotate(120)"/><rect x="-0.85" y="-6.95" width="1.7" height="2.3" transform="rotate(150)"/><rect x="-0.85" y="-6.95" width="1.7" height="2.3" transform="rotate(180)"/><rect x="-0.85" y="-6.95" width="1.7" height="2.3" transform="rotate(210)"/><rect x="-0.85" y="-6.95" width="1.7" height="2.3" transform="rotate(240)"/><rect x="-0.85" y="-6.95" width="1.7" height="2.3" transform="rotate(270)"/><rect x="-0.85" y="-6.95" width="1.7" height="2.3" transform="rotate(300)"/><rect x="-0.85" y="-6.95" width="1.7" height="2.3" transform="rotate(330)"/></g>
<circle cx="6.8" cy="6.9" r="3.95" fill="none" stroke="#c8e6f6" stroke-width="2.1"/>
<circle cx="6.8" cy="6.9" r="3.05" fill="#fff" stroke="#868d96" stroke-width="0.8"/>
<g transform="translate(12.8 12.9)" fill="#7aa3cc"><rect x="-0.5" y="-3.4" width="1" height="1.5" transform="rotate(10)"/><rect x="-0.5" y="-3.4" width="1" height="1.5" transform="rotate(55)"/><rect x="-0.5" y="-3.4" width="1" height="1.5" transform="rotate(100)"/><rect x="-0.5" y="-3.4" width="1" height="1.5" transform="rotate(145)"/><rect x="-0.5" y="-3.4" width="1" height="1.5" transform="rotate(190)"/><rect x="-0.5" y="-3.4" width="1" height="1.5" transform="rotate(235)"/><rect x="-0.5" y="-3.4" width="1" height="1.5" transform="rotate(280)"/><rect x="-0.5" y="-3.4" width="1" height="1.5" transform="rotate(325)"/></g>
<circle cx="12.8" cy="12.9" r="1.5" fill="#fff" stroke="#a9cde8" stroke-width="1.5"/>
</symbol></svg>
<svg style="left:4px;top:400px" width="16" height="16" viewBox="0 0 16 16"><g>
<g transform="translate(6.8 6.9)" fill="#8aadd0"><rect x="-0.85" y="-6.95" width="1.7" height="2.3" transform="rotate(0)"/><rect x="-0.85" y="-6.95" width="1.7" height="2.3" transform="rotate(30)"/><rect x="-0.85" y="-6.95" width="1.7" height="2.3" transform="rotate(60)"/><rect x="-0.85" y="-6.95" width="1.7" height="2.3" transform="rotate(90)"/><rect x="-0.85" y="-6.95" width="1.7" height="2.3" transform="rotate(120)"/><rect x="-0.85" y="-6.95" width="1.7" height="2.3" transform="rotate(150)"/><rect x="-0.85" y="-6.95" width="1.7" height="2.3" transform="rotate(180)"/><rect x="-0.85" y="-6.95" width="1.7" height="2.3" transform="rotate(210)"/><rect x="-0.85" y="-6.95" width="1.7" height="2.3" transform="rotate(240)"/><rect x="-0.85" y="-6.95" width="1.7" height="2.3" transform="rotate(270)"/><rect x="-0.85" y="-6.95" width="1.7" height="2.3" transform="rotate(300)"/><rect x="-0.85" y="-6.95" width="1.7" height="2.3" transform="rotate(330)"/></g>
<circle cx="6.8" cy="6.9" r="3.95" fill="none" stroke="#c8e6f6" stroke-width="2.1"/>
<circle cx="6.8" cy="6.9" r="3.05" fill="#fff" stroke="#868d96" stroke-width="0.8"/>
<g transform="translate(12.8 12.9)" fill="#7aa3cc"><rect x="-0.5" y="-3.4" width="1" height="1.5" transform="rotate(10)"/><rect x="-0.5" y="-3.4" width="1" height="1.5" transform="rotate(55)"/><rect x="-0.5" y="-3.4" width="1" height="1.5" transform="rotate(100)"/><rect x="-0.5" y="-3.4" width="1" height="1.5" transform="rotate(145)"/><rect x="-0.5" y="-3.4" width="1" height="1.5" transform="rotate(190)"/><rect x="-0.5" y="-3.4" width="1" height="1.5" transform="rotate(235)"/><rect x="-0.5" y="-3.4" width="1" height="1.5" transform="rotate(280)"/><rect x="-0.5" y="-3.4" width="1" height="1.5" transform="rotate(325)"/></g>
<circle cx="12.8" cy="12.9" r="1.5" fill="#fff" stroke="#a9cde8" stroke-width="1.5"/>
</symbol></svg>
<svg style="left:4px;top:419px" width="16" height="16" viewBox="0 0 16 16"><g>
<g transform="translate(6.8 6.9)" fill="#8aadd0"><rect x="-0.85" y="-6.95" width="1.7" height="2.3" transform="rotate(0)"/><rect x="-0.85" y="-6.95" width="1.7" height="2.3" transform="rotate(30)"/><rect x="-0.85" y="-6.95" width="1.7" height="2.3" transform="rotate(60)"/><rect x="-0.85" y="-6.95" width="1.7" height="2.3" transform="rotate(90)"/><rect x="-0.85" y="-6.95" width="1.7" height="2.3" transform="rotate(120)"/><rect x="-0.85" y="-6.95" width="1.7" height="2.3" transform="rotate(150)"/><rect x="-0.85" y="-6.95" width="1.7" height="2.3" transform="rotate(180)"/><rect x="-0.85" y="-6.95" width="1.7" height="2.3" transform="rotate(210)"/><rect x="-0.85" y="-6.95" width="1.7" height="2.3" transform="rotate(240)"/><rect x="-0.85" y="-6.95" width="1.7" height="2.3" transform="rotate(270)"/><rect x="-0.85" y="-6.95" width="1.7" height="2.3" transform="rotate(300)"/><rect x="-0.85" y="-6.95" width="1.7" height="2.3" transform="rotate(330)"/></g>
<circle cx="6.8" cy="6.9" r="3.95" fill="none" stroke="#c8e6f6" stroke-width="2.1"/>
<circle cx="6.8" cy="6.9" r="3.05" fill="#fff" stroke="#868d96" stroke-width="0.8"/>
<g transform="translate(12.8 12.9)" fill="#7aa3cc"><rect x="-0.5" y="-3.4" width="1" height="1.5" transform="rotate(10)"/><rect x="-0.5" y="-3.4" width="1" height="1.5" transform="rotate(55)"/><rect x="-0.5" y="-3.4" width="1" height="1.5" transform="rotate(100)"/><rect x="-0.5" y="-3.4" width="1" height="1.5" transform="rotate(145)"/><rect x="-0.5" y="-3.4" width="1" height="1.5" transform="rotate(190)"/><rect x="-0.5" y="-3.4" width="1" height="1.5" transform="rotate(235)"/><rect x="-0.5" y="-3.4" width="1" height="1.5" transform="rotate(280)"/><rect x="-0.5" y="-3.4" width="1" height="1.5" transform="rotate(325)"/></g>
<circle cx="12.8" cy="12.9" r="1.5" fill="#fff" stroke="#a9cde8" stroke-width="1.5"/>
</symbol></svg>
<div class="a" style="left:186px;top:3px;letter-spacing:-0.435px;">1128</div>
<div class="a" style="left:236px;top:3px;letter-spacing:-0.220px;">Servizio Gestione licenze Windows</div>
<div class="a" style="left:452px;top:3px;letter-spacing:-0.188px;">In esecuzione</div>
<div class="a" style="left:552px;top:3px;letter-spacing:-0.300px;">LocalService</div>
<div class="a" style="left:236px;top:22px;letter-spacing:0.108px;">Mapper individuazione topologia liv...</div>
<div class="a" style="left:452px;top:22px;letter-spacing:-0.098px;">Arrestato</div>
<div class="a" style="left:552px;top:22px;letter-spacing:-0.300px;">LocalService</div>
<div class="a" style="left:236px;top:41px;letter-spacing:-0.357px;">Helper NetBIOS di TCP/IP</div>
<div class="a" style="left:452px;top:41px;letter-spacing:-0.098px;">Arrestato</div>
<div class="a" style="left:552px;top:41px;letter-spacing:-0.291px;">LocalServiceN...</div>
<div class="a" style="left:186px;top:60px;letter-spacing:-1.211px;">736</div>
<div class="a" style="left:236px;top:60px;letter-spacing:-0.165px;">Gestione sessioni locali</div>
<div class="a" style="left:452px;top:60px;letter-spacing:-0.188px;">In esecuzione</div>
<div class="a" style="left:552px;top:60px;letter-spacing:-0.001px;">DcomLaunch</div>
<div class="a" style="left:236px;top:79px;letter-spacing:-0.160px;">Servizio lingua</div>
<div class="a" style="left:452px;top:79px;letter-spacing:-0.098px;">Arrestato</div>
<div class="a" style="left:552px;top:79px;letter-spacing:-0.197px;">netsvcs</div>
<div class="a" style="left:236px;top:98px;letter-spacing:-0.170px;">Gestione mappe scaricate</div>
<div class="a" style="left:452px;top:98px;letter-spacing:-0.098px;">Arrestato</div>
<div class="a" style="left:552px;top:98px;letter-spacing:-0.109px;">NetworkService</div>
<div class="a" style="left:236px;top:117px;letter-spacing:-0.243px;">MessagingService</div>
<div class="a" style="left:452px;top:117px;letter-spacing:-0.098px;">Arrestato</div>
<div class="a" style="left:552px;top:117px;letter-spacing:-0.312px;">UnistackSvcGr...</div>
<div class="a" style="left:236px;top:136px;letter-spacing:-0.342px;">MessagingService_342dd</div>
<div class="a" style="left:452px;top:136px;letter-spacing:-0.098px;">Arrestato</div>
<div class="a" style="left:552px;top:136px;letter-spacing:-0.312px;">UnistackSvcGr...</div>
<div class="a" style="left:22px;top:155px;letter-spacing:-0.094px;">mpssvc</div>
<div class="a" style="left:186px;top:155px;letter-spacing:-0.732px;">1904</div>
<div class="a" style="left:236px;top:155px;letter-spacing:-0.119px;">Windows Defender Firewall</div>
<div class="a" style="left:452px;top:155px;letter-spacing:-0.188px;">In esecuzione</div>
<div class="a" style="left:552px;top:155px;letter-spacing:-0.291px;">LocalServiceN...</div>
<div class="a" style="left:22px;top:174px;letter-spacing:-1.366px;">MSDTC</div>
<div class="a" style="left:236px;top:174px;letter-spacing:-0.020px;">Distributed Transaction Coordinator</div>
<div class="a" style="left:452px;top:174px;letter-spacing:-0.098px;">Arrestato</div>
<div class="a" style="left:22px;top:193px;letter-spacing:-0.912px;">MSiSCSI</div>
<div class="a" style="left:236px;top:193px;letter-spacing:-0.157px;">Servizio iniziatore iSCSI Microsoft</div>
<div class="a" style="left:452px;top:193px;letter-spacing:-0.098px;">Arrestato</div>
<div class="a" style="left:552px;top:193px;letter-spacing:-0.197px;">netsvcs</div>
<div class="a" style="left:22px;top:212px;letter-spacing:-0.225px;">msiserver</div>
<div class="a" style="left:236px;top:212px;letter-spacing:-0.039px;">Windows Installer</div>
<div class="a" style="left:452px;top:212px;letter-spacing:-0.098px;">Arrestato</div>
<div class="a" style="left:22px;top:231px;letter-spacing:0.158px;">NaturalAuthentication</div>
<div class="a" style="left:236px;top:231px;letter-spacing:0.022px;">Autenticazione naturale</div>
<div class="a" style="left:452px;top:231px;letter-spacing:-0.098px;">Arrestato</div>
<div class="a" style="left:552px;top:231px;letter-spacing:-0.197px;">netsvcs</div>
<div class="a" style="left:22px;top:250px;letter-spacing:-0.429px;">NcaSvc</div>
<div class="a" style="left:236px;top:250px;letter-spacing:-0.009px;">Assistente connettività di rete</div>
<div class="a" style="left:452px;top:250px;letter-spacing:-0.098px;">Arrestato</div>
<div class="a" style="left:552px;top:250px;letter-spacing:-0.413px;">NetSvcs</div>
<div class="a" style="left:22px;top:269px;letter-spacing:-0.250px;">NcbService</div>
<div class="a" style="left:186px;top:269px;letter-spacing:-1.211px;">312</div>
<div class="a" style="left:236px;top:269px;letter-spacing:-0.214px;">Gestore connessione rete</div>
<div class="a" style="left:452px;top:269px;letter-spacing:-0.188px;">In esecuzione</div>
<div class="a" style="left:552px;top:269px;letter-spacing:-0.269px;">LocalSystemN...</div>
<div class="a" style="left:22px;top:288px;letter-spacing:0.056px;">NcdAutoSetup</div>
<div class="a" style="left:236px;top:288px;letter-spacing:0.031px;">Configurazione automatica dispositi...</div>
<div class="a" style="left:452px;top:288px;letter-spacing:-0.098px;">Arrestato</div>
<div class="a" style="left:552px;top:288px;letter-spacing:-0.291px;">LocalServiceN...</div>
<div class="a" style="left:22px;top:307px;letter-spacing:0.309px;">Netlogon</div>
<div class="a" style="left:236px;top:307px;letter-spacing:-0.260px;">Accesso rete</div>
<div class="a" style="left:452px;top:307px;letter-spacing:-0.098px;">Arrestato</div>
<div class="a" style="left:22px;top:326px;letter-spacing:0.176px;">Netman</div>
<div class="a" style="left:236px;top:326px;letter-spacing:-0.057px;">Connessioni di rete</div>
<div class="a" style="left:452px;top:326px;letter-spacing:-0.098px;">Arrestato</div>
<div class="a" style="left:552px;top:326px;letter-spacing:-0.269px;">LocalSystemN...</div>
<div class="a" style="left:22px;top:345px;letter-spacing:0.349px;">netprofm</div>
<div class="a" style="left:186px;top:345px;letter-spacing:-0.435px;">1128</div>
<div class="a" style="left:236px;top:345px;letter-spacing:-0.211px;">Servizio Elenco reti</div>
<div class="a" style="left:452px;top:345px;letter-spacing:-0.188px;">In esecuzione</div>
<div class="a" style="left:552px;top:345px;letter-spacing:-0.300px;">LocalService</div>
<div class="a" style="left:22px;top:364px;letter-spacing:-0.294px;">NetSetupSvc</div>
<div class="a" style="left:236px;top:364px;letter-spacing:-0.135px;">Servizio di installazione della rete</div>
<div class="a" style="left:452px;top:364px;letter-spacing:-0.098px;">Arrestato</div>
<div class="a" style="left:552px;top:364px;letter-spacing:-0.197px;">netsvcs</div>
<div class="a" style="left:22px;top:383px;letter-spacing:-0.151px;">NetTcpPortSharing</div>
<div class="a" style="left:236px;top:383px;letter-spacing:-0.068px;">Servizio di condivisione porte Net.Tcp</div>
<div class="a" style="left:452px;top:383px;letter-spacing:-0.098px;">Arrestato</div>
<div class="a" style="left:22px;top:402px;letter-spacing:-0.068px;">NgcCtnrSvc</div>
<div class="a" style="left:236px;top:402px;letter-spacing:0.023px;">Contenitore Microsoft Passport</div>
<div class="a" style="left:452px;top:402px;letter-spacing:-0.098px;">Arrestato</div>
<div class="a" style="left:552px;top:402px;letter-spacing:-0.291px;">LocalServiceN...</div>
<div class="a" style="left:22px;top:421px;letter-spacing:-0.229px;">NgcSvc</div>
<div class="a" style="left:236px;top:421px;letter-spacing:0.002px;">Microsoft Passport</div>
<div class="a" style="left:452px;top:421px;letter-spacing:-0.098px;">Arrestato</div>
<div class="a" style="left:552px;top:421px;letter-spacing:-0.269px;">LocalSystemN...</div>
</div>
<div class="ln" style="left:646px;top:88px;width:17px;height:454px;background:#f0f0f0"></div>
<div class="ln" style="left:647px;top:256px;width:15px;height:36px;background:#cdcdcd"></div>
<svg style="left:646px;top:88px" width="17" height="454" viewBox="0 0 17 454"><path d="M5.2 11 L8.7 7.5 L12.2 11" stroke="#505050" stroke-width="2" fill="none"/><path d="M5.2 443.6 L8.7 447.1 L12.2 443.6" stroke="#505050" stroke-width="2" fill="none"/></svg>
<div class="ln" style="left:645px;top:88px;width:1px;height:454px;background:#eef3f9"></div>
<div class="ln" style="left:645px;top:112px;width:1px;height:19px;background:#cce8ff"></div>
<div class="ln" style="left:23px;top:117px;width:2px;height:1px;background:rgba(25,10,45,0.8)"></div>
<div class="ln" style="left:29px;top:117px;width:2px;height:1px;background:rgba(25,10,45,0.8)"></div>
<div class="ln" style="left:62px;top:117px;width:2px;height:1px;background:rgba(25,10,45,0.8)"></div>
<div class="ln" style="left:70px;top:117px;width:2px;height:1px;background:rgba(25,10,45,0.8)"></div>
<div class="ln" style="left:22px;top:117px;width:1px;height:9px;background:#e4f3b8"></div>
<div class="ln" style="left:23px;top:118px;width:159px;height:143px;background:#f6f6f6;border-left:1px solid #c2c2c2;border-top:1px solid #c2c2c2;box-shadow:3px 3px 2px rgba(0,0,0,0.5)"></div>
<div class="ln" style="left:26px;top:121px;width:154px;height:139px;background:#f0f0f0"></div>
<div class="ln" style="left:22px;top:136px;width:1px;height:9px;background:#ffffb3"></div>
<div class="ln" style="left:22px;top:155px;width:1px;height:9px;background:#ffffb3"></div>
<div class="ln" style="left:22px;top:174px;width:1px;height:9px;background:#ffffb3"></div>
<div class="ln" style="left:22px;top:193px;width:1px;height:9px;background:#ffffb3"></div>
<div class="ln" style="left:22px;top:212px;width:1px;height:9px;background:#ffffb3"></div>
<div class="ln" style="left:22px;top:231px;width:1px;height:9px;background:#ffffb3"></div>
<div class="ln" style="left:22px;top:250px;width:1px;height:9px;background:#ffffb3"></div>
<div class="a" style="left:58px;top:125px;letter-spacing:-0.057px;color:#6d6d6d;">Avvia</div>
<div class="a" style="left:58px;top:147px;letter-spacing:-0.313px;color:#000;">Arresta</div>
<div class="a" style="left:58px;top:169px;letter-spacing:-0.424px;color:#000;">Riavvia</div>
<div class="a" style="left:58px;top:198px;letter-spacing:-0.116px;color:#000;">Apri servizi</div>
<div class="a" style="left:58px;top:220px;letter-spacing:-0.061px;color:#000;">Cerca online</div>
<div class="a" style="left:58px;top:242px;letter-spacing:-0.068px;color:#000;">Vai ai dettagli</div>
<div class="ln" style="left:54px;top:190px;width:126px;height:1px;background:#d7d7d7"></div>
<svg style="left:40px;top:160px" width="80" height="32" viewBox="40 160 80 32"><rect x="44.6" y="165.5" width="69" height="21" fill="none" stroke="#ff0000" stroke-width="2.9" stroke-dasharray="6 6" stroke-dashoffset="6.2" stroke-linecap="round" stroke-linejoin="round"/></svg>
<svg style="left:7px;top:557px" width="19" height="19" viewBox="0 0 19 19"><circle cx="9.4" cy="9.4" r="8.8" fill="none" stroke="#8a8a8a" stroke-width="1"/><path d="M5.2 11.2 L9.5 6.7 L13.8 11.2" stroke="#8a8a8a" stroke-width="1.1" fill="none"/></svg>
<div class="ln" style="left:115px;top:559px;width:1px;height:15px;background:#d9d9d9"></div>
<svg style="left:124px;top:559px" width="16" height="16" viewBox="0 0 16 16"><g>
<g transform="translate(6.8 6.9)" fill="#8aadd0"><rect x="-0.85" y="-6.95" width="1.7" height="2.3" transform="rotate(0)"/><rect x="-0.85" y="-6.95" width="1.7" height="2.3" transform="rotate(30)"/><rect x="-0.85" y="-6.95" width="1.7" height="2.3" transform="rotate(60)"/><rect x="-0.85" y="-6.95" width="1.7" height="2.3" transform="rotate(90)"/><rect x="-0.85" y="-6.95" width="1.7" height="2.3" transform="rotate(120)"/><rect x="-0.85" y="-6.95" width="1.7" height="2.3" transform="rotate(150)"/><rect x="-0.85" y="-6.95" width="1.7" height="2.3" transform="rotate(180)"/><rect x="-0.85" y="-6.95" width="1.7" height="2.3" transform="rotate(210)"/><rect x="-0.85" y="-6.95" width="1.7" height="2.3" transform="rotate(240)"/><rect x="-0.85" y="-6.95" width="1.7" height="2.3" transform="rotate(270)"/><rect x="-0.85" y="-6.95" width="1.7" height="2.3" transform="rotate(300)"/><rect x="-0.85" y="-6.95" width="1.7" height="2.3" transform="rotate(330)"/></g>
<circle cx="6.8" cy="6.9" r="3.95" fill="none" stroke="#c8e6f6" stroke-width="2.1"/>
<circle cx="6.8" cy="6.9" r="3.05" fill="#fff" stroke="#868d96" stroke-width="0.8"/>
<g transform="translate(12.8 12.9)" fill="#7aa3cc"><rect x="-0.5" y="-3.4" width="1" height="1.5" transform="rotate(10)"/><rect x="-0.5" y="-3.4" width="1" height="1.5" transform="rotate(55)"/><rect x="-0.5" y="-3.4" width="1" height="1.5" transform="rotate(100)"/><rect x="-0.5" y="-3.4" width="1" height="1.5" transform="rotate(145)"/><rect x="-0.5" y="-3.4" width="1" height="1.5" transform="rotate(190)"/><rect x="-0.5" y="-3.4" width="1" height="1.5" transform="rotate(235)"/><rect x="-0.5" y="-3.4" width="1" height="1.5" transform="rotate(280)"/><rect x="-0.5" y="-3.4" width="1" height="1.5" transform="rotate(325)"/></g>
<circle cx="12.8" cy="12.9" r="1.5" fill="#fff" stroke="#a9cde8" stroke-width="1.5"/>
</symbol></svg>
<div class="a" style="left:33px;top:560px;letter-spacing:0.196px;">Meno dettagli</div>
<div class="a" style="left:145px;top:560px;letter-spacing:-0.125px;color:#0066cc;">Apri servizi</div>
</body></html>
